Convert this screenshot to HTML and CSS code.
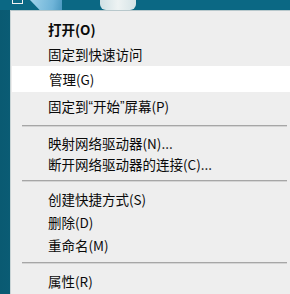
FILE: index.html
```html
<!DOCTYPE html>
<html lang="zh-CN">
<head>
    <meta charset="UTF-8">
    <meta name="viewport" content="width=device-width, initial-scale=1.0">
    <title>右键菜单</title>
    <link rel="stylesheet" href="styles.css">
</head>
<body>
    <div class="desktop">
        <div class="icon icon-file"></div>
        <div class="icon icon-folder"></div>
        <div class="icon icon-bin"></div>
    </div>

    <div class="menu">
        <div class="item bold r1">打开(O)</div>
        <div class="item r2">固定到快速访问</div>
        <div class="item hover r3">管理(G)</div>
        <div class="item r4">固定到<span class="q">“</span>开始<span class="q">”</span>屏幕(P)</div>
        <div class="sep"></div>
        <div class="item r5">映射网络驱动器(N)...</div>
        <div class="item r5">断开网络驱动器的连接(C)...</div>
        <div class="sep"></div>
        <div class="item r6">创建快捷方式(S)</div>
        <div class="item r6">删除(D)</div>
        <div class="item r6">重命名(M)</div>
        <div class="sep"></div>
        <div class="item r6">属性(R)</div>
    </div>
</body>
</html>
```

FILE: styles.css
```css
html, body {
    margin: 0;
    height: 100%;
    overflow: hidden;
}

body {
    display: flex;
    flex-direction: column;
    background: linear-gradient(90deg, #0a5a72 0%, #137b98 60%, #0d6884 100%);
    font-family: "Noto Sans CJK SC", "Noto Sans", sans-serif;
    color: #0a0a0a;
}

.desktop {
    position: relative;
    flex: none;
    height: 10px;
    background: #0b6884;
}

.icon {
    position: absolute;
    top: 0;
}

.icon-file {
    left: 12px;
    width: 9px;
    height: 3px;
    border: 1px solid #f2f2f2;
    border-top: none;
}

.icon-folder {
    left: 30px;
    width: 32px;
    height: 10px;
    background: linear-gradient(100deg, #9fd2ea 0%, #6fb4d8 70%, #4a98c0 100%);
    clip-path: polygon(0 0, 100% 0, 100% 100%, 30% 100%);
}

.icon-bin {
    left: 100px;
    width: 36px;
    height: 10px;
    background: linear-gradient(90deg, #cfe0e4 0%, #eef3f3 50%, #d5e3e6 100%);
    border-radius: 0 0 6px 6px;
}

.menu {
    flex: 1;
    margin-left: 10px;
    background: #eeeeee;
    border-top: 1px solid #b8c8cc;
    border-left: 1px solid #c9d4d6;
    padding-top: 5px;
    font-size: 13.5px;
}

.item {
    padding-left: 37px;
    white-space: nowrap;
    display: flex;
    align-items: center;
}

.r1 { height: 26px; }
.r2 { height: 24px; }
.r3 { height: 26px; }
.r4 { height: 27px; }
.r5 { height: 21px; }
.r6 { height: 23px; }

.bold {
    font-weight: bold;
}

.q {
    font-family: "Liberation Sans", sans-serif;
}

.hover {
    background: #ffffff;
    margin-left: 1px;
}

.sep {
    flex: none;
    height: 1px;
    margin: 6px 3px 6px 11px;
    background: #a6a6a6;
    box-shadow: 0 1px 0 #d4d4d4;
}
```
